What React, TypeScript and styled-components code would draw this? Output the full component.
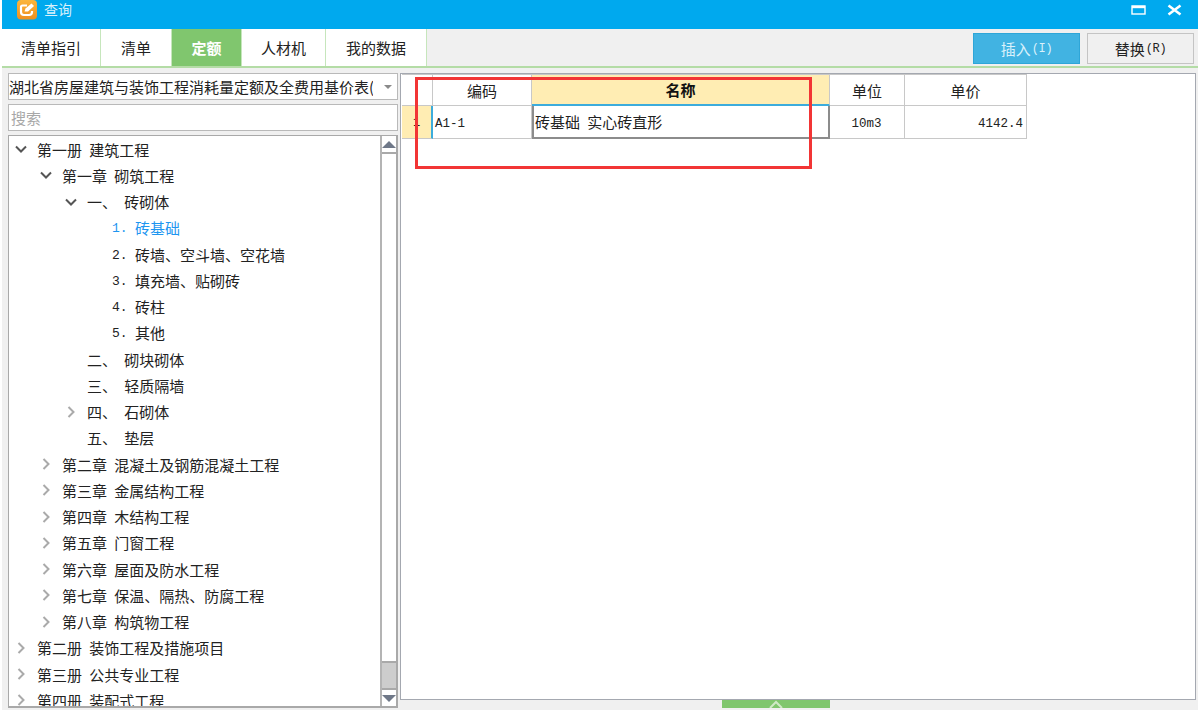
import React from "react";
import styled, { createGlobalStyle } from "styled-components";

const GlobalStyle = createGlobalStyle`
  html, body { margin: 0; padding: 0; height: 100%; background: #fff; overflow: hidden; }
  body { font-family: "Noto Sans CJK SC", "Liberation Sans", sans-serif; font-size: 15px; color: #222; }
`;

const Window = styled.div`
  margin-left: 2px;
  width: 1196px;
  height: 710px;
  display: flex;
  flex-direction: column;
  background: #f0f0f0;
`;

const TitleBar = styled.div`
  height: 29px;
  flex: none;
  box-sizing: border-box;
  display: flex;
  align-items: center;
  padding: 0 15px 10px 15px;
  background: #00a9ee;
  color: #d8f1fc;
  font-size: 14px;
`;

const TitleText = styled.span`
  margin: 0 0 2px 7px;
  flex: 1;
`;

const WinButton = styled.svg`
  width: 16px;
  height: 16px;
  margin-left: 20px;
  display: block;
`;

const ToolBar = styled.div`
  height: 37px;
  flex: none;
  display: flex;
  justify-content: space-between;
  border-bottom: 2px solid #b4dca6;
  box-sizing: content-box;
`;

const Tabs = styled.div`
  display: flex;
`;

const Tab = styled.div<{ $width: number; $active?: boolean }>`
  width: ${(p) => p.$width}px;
  display: flex;
  align-items: center;
  justify-content: center;
  box-sizing: border-box;
  border-right: 1px solid #c6e6bc;
  background: ${(p) => (p.$active ? "#80c66e" : "#fff")};
  color: ${(p) => (p.$active ? "#fff" : "#222")};
  font-weight: ${(p) => (p.$active ? 700 : 400)};
  font-size: 15px;
`;

const Actions = styled.div`
  display: flex;
  gap: 7px;
  padding: 4px 4px 2px 0;
`;

const ActionButton = styled.div<{ $primary?: boolean }>`
  width: 107px;
  display: flex;
  align-items: center;
  justify-content: center;
  box-sizing: border-box;
  border: 1px solid ${(p) => (p.$primary ? "#2ea6d8" : "#c4c4c4")};
  background: ${(p) => (p.$primary ? "#41b3e2" : "#f0f0f0")};
  color: ${(p) => (p.$primary ? "#d9f1fb" : "#222")};
  font-size: 15px;
`;

const Hotkey = styled.span`
  font-family: "Liberation Mono", monospace;
  font-size: 12px;
  margin-left: 1px;
  letter-spacing: -0.4px;
`;

const Body = styled.div`
  flex: 1;
  min-height: 0;
  display: flex;
  padding: 5px 2px 2px 6px;
  gap: 2px;
`;

const LeftPane = styled.div`
  width: 390px;
  flex: none;
  display: flex;
  flex-direction: column;
  gap: 4px;
`;

const Field = styled.div`
  height: 27px;
  flex: none;
  box-sizing: border-box;
  display: flex;
  align-items: center;
  padding: 0 2px;
  background: #fff;
  border: 1px solid #b9b9b9;
  white-space: nowrap;
  overflow: hidden;
`;

const ComboText = styled.span`
  flex: 1;
  margin-left: -2px;
  overflow: hidden;
  color: #222;
`;

const ComboArrow = styled.span`
  flex: none;
  width: 0;
  height: 0;
  margin: 1px 3px 0 11px;
  border-left: 4px solid transparent;
  border-right: 4px solid transparent;
  border-top: 4px solid #8a8a8a;
`;

const SearchHint = styled.span`
  color: #a8a8a8;
`;

const TreeBox = styled.div`
  flex: 1;
  min-height: 0;
  display: flex;
  background: #fff;
  border: 1px solid #a9a9a9;
  border-right-width: 2px;
  border-bottom-width: 2px;
  overflow: hidden;
`;

const TreeList = styled.div`
  flex: 1;
  overflow: hidden;
`;

const TreeRow = styled.div<{ $level: number; $selected?: boolean }>`
  height: 26.25px;
  display: flex;
  align-items: center;
  padding-left: ${(p) => 4 + p.$level * 25}px;
  white-space: pre;
  word-spacing: 4px;
  color: ${(p) => (p.$selected ? "#1e96f0" : "#222")};
`;

const Caret = styled.svg`
  width: 16px;
  height: 16px;
  flex: none;
  margin-right: 8px;
  display: block;
`;

const CaretSpace = styled.span`
  width: 24px;
  flex: none;
`;

const ItemNumber = styled.span`
  width: 23px;
  flex: none;
  padding-top: 2px;
  font-family: "Liberation Mono", monospace;
  font-size: 13px;
`;

const ScrollBar = styled.div`
  width: 16px;
  flex: none;
  box-sizing: border-box;
  display: flex;
  flex-direction: column;
  border-left: 2px solid #b4b4b4;
  background: #cdcdcd;
`;

const ScrollButton = styled.div<{ $down?: boolean }>`
  height: 18px;
  flex: none;
  box-sizing: border-box;
  display: flex;
  align-items: center;
  justify-content: center;
  background: #fff;
  ${(p) => (p.$down ? "border-top: 2px solid #a9a9a9;" : "border-bottom: 2px solid #a9a9a9;")}
`;

const ScrollArrow = styled.span<{ $down?: boolean }>`
  width: 0;
  height: 0;
  border-left: 7px solid transparent;
  border-right: 7px solid transparent;
  ${(p) => (p.$down ? "border-top: 7px solid #6f7888;" : "border-bottom: 7px solid #6f7888;")}
`;

const ScrollThumb = styled.div`
  height: 509px;
  flex: none;
  box-sizing: border-box;
  background: #fff;
  border-bottom: 2px solid #a9a9a9;
`;

const ScrollTrack = styled.div`
  flex: 1;
`;

const RightColumn = styled.div`
  flex: 1;
  min-width: 0;
  display: flex;
  flex-direction: column;
`;

const GridPanel = styled.div`
  position: relative;
  height: 627px;
  flex: none;
  box-sizing: border-box;
  padding: 0 0 0 1px;
  background: #fff;
  border: 1px solid #a4a8b0;
`;

const Grid = styled.div`
  display: grid;
  grid-template-columns: 31px 99px 298px 75px 122px;
  grid-template-rows: 32px 33px;
  width: 625px;
`;

const HeadCell = styled.div<{ $selected?: boolean }>`
  display: flex;
  align-items: center;
  justify-content: center;
  box-sizing: border-box;
  border-right: 1px solid #c8c8c8;
  border-bottom: ${(p) => (p.$selected ? "2px solid #3cacdc" : "1px solid #c8c8c8")};
  border-top: 1px solid #c8c8c8;
  background: ${(p) => (p.$selected ? "#ffedb3" : "#fff")};
  font-weight: ${(p) => (p.$selected ? 700 : 400)};
  color: ${(p) => (p.$selected ? "#111" : "#222")};
`;

const RowMark = styled.div`
  display: flex;
  align-items: center;
  justify-content: center;
  box-sizing: border-box;
  padding-top: 2px;
  background: #ffedb3;
  border-right: 2px solid #3cacdc;
  border-bottom: 1px solid #c8c8c8;
  font-family: "Liberation Mono", monospace;
  font-size: 12px;
`;

const Cell = styled.div<{ $align?: string; $mono?: boolean; $active?: boolean }>`
  display: flex;
  align-items: center;
  box-sizing: border-box;
  padding: 0 ${(p) => (p.$active ? 0 : 3)}px 0 ${(p) => (p.$active ? 1 : 2)}px;
  justify-content: ${(p) => p.$align || "flex-start"};
  white-space: pre;
  word-spacing: 4px;
  ${(p) =>
    p.$active
      ? "border: 2px solid #8c8c8c; border-top: 0;"
      : "border-right: 1px solid #c8c8c8; border-bottom: 1px solid #c8c8c8;"}
  ${(p) => p.$mono && 'padding-top: 3px; font-family: "Liberation Mono", monospace; font-size: 12.5px;'}
`;

const RedFrame = styled.div`
  position: absolute;
  left: 14px;
  top: 3px;
  width: 397px;
  height: 92px;
  box-sizing: border-box;
  border: 3px solid #f23535;
  pointer-events: none;
`;

const Handle = styled.div`
  width: 108px;
  height: 8px;
  flex: none;
  margin-left: 322px;
  display: flex;
  justify-content: center;
  background: #80c66e;
`;

const tabs = [
  { label: "清单指引", width: 99 },
  { label: "清单", width: 71 },
  { label: "定额", width: 70, active: true },
  { label: "人材机", width: 84 },
  { label: "我的数据", width: 101 },
];

type Node = {
  level: number;
  text: string;
  caret?: "open" | "closed";
  num?: string;
  selected?: boolean;
};

const nodes: Node[] = [
  { level: 0, text: "第一册 建筑工程", caret: "open" },
  { level: 1, text: "第一章 砌筑工程", caret: "open" },
  { level: 2, text: "一、 砖砌体", caret: "open" },
  { level: 3, num: "1.", text: "砖基础", selected: true },
  { level: 3, num: "2.", text: "砖墙、空斗墙、空花墙" },
  { level: 3, num: "3.", text: "填充墙、贴砌砖" },
  { level: 3, num: "4.", text: "砖柱" },
  { level: 3, num: "5.", text: "其他" },
  { level: 2, text: "二、 砌块砌体" },
  { level: 2, text: "三、 轻质隔墙" },
  { level: 2, text: "四、 石砌体", caret: "closed" },
  { level: 2, text: "五、 垫层" },
  { level: 1, text: "第二章 混凝土及钢筋混凝土工程", caret: "closed" },
  { level: 1, text: "第三章 金属结构工程", caret: "closed" },
  { level: 1, text: "第四章 木结构工程", caret: "closed" },
  { level: 1, text: "第五章 门窗工程", caret: "closed" },
  { level: 1, text: "第六章 屋面及防水工程", caret: "closed" },
  { level: 1, text: "第七章 保温、隔热、防腐工程", caret: "closed" },
  { level: 1, text: "第八章 构筑物工程", caret: "closed" },
  { level: 0, text: "第二册 装饰工程及措施项目", caret: "closed" },
  { level: 0, text: "第三册 公共专业工程", caret: "closed" },
  { level: 0, text: "第四册 装配式工程", caret: "closed" },
];

const TreeCaret = ({ open }: { open: boolean }) => (
  <Caret viewBox="0 0 16 16" fill="none" strokeWidth="2" stroke={open ? "#555" : "#aaa"}>
    <path d={open ? "M3 5.5l5 5 5-5" : "M5.5 3l5 5-5 5"} />
  </Caret>
);

const Logo = () => (
  <svg width="20" height="20" viewBox="0 0 20 20" style={{ display: "block" }}>
    <defs>
      <linearGradient id="logoFill" x1="0" y1="0" x2="0" y2="1">
        <stop offset="0" stopColor="#fbb63c" />
        <stop offset="1" stopColor="#ef8f1e" />
      </linearGradient>
    </defs>
    <rect x="0" y="0" width="20" height="19.5" rx="4" fill="url(#logoFill)" />
    <path d="M10 5.5H5.5Q4 5.5 4 7v5q0 3 3 3h5q3 0 3-3v-1" fill="none" stroke="#fff" strokeWidth="2.2" />
    <path d="M7.5 11.5l1-3 6-5 2.5 2.5-6 5.5z" fill="#fff" />
  </svg>
);

export default function App() {
  return (
    <>
      <GlobalStyle />
      <Window>
        <TitleBar>
          <Logo />
          <TitleText>查询</TitleText>
          <WinButton viewBox="0 0 16 16" fill="none" stroke="#fff">
            <rect x="1" y="4" width="13" height="8" strokeWidth="1.4" />
            <path d="M1 5h13" strokeWidth="2.4" />
          </WinButton>
          <WinButton viewBox="0 0 16 16" fill="none" stroke="#fff" strokeWidth="2.6">
            <path d="M1.5 3.5l12 9M13.5 3.5l-12 9" />
          </WinButton>
        </TitleBar>
        <ToolBar>
          <Tabs>
            {tabs.map((t) => (
              <Tab key={t.label} $width={t.width} $active={t.active}>
                {t.label}
              </Tab>
            ))}
          </Tabs>
          <Actions>
            <ActionButton $primary>
              插入<Hotkey>(I)</Hotkey>
            </ActionButton>
            <ActionButton>
              替换<Hotkey>(R)</Hotkey>
            </ActionButton>
          </Actions>
        </ToolBar>
        <Body>
          <LeftPane>
            <Field>
              <ComboText>湖北省房屋建筑与装饰工程消耗量定额及全费用基价表(2018)</ComboText>
              <ComboArrow />
            </Field>
            <Field>
              <SearchHint>搜索</SearchHint>
            </Field>
            <TreeBox>
              <TreeList>
                {nodes.map((n) => (
                  <TreeRow key={n.text} $level={n.level} $selected={n.selected}>
                    {n.caret ? <TreeCaret open={n.caret === "open"} /> : <CaretSpace />}
                    {n.num && <ItemNumber>{n.num}</ItemNumber>}
                    {n.text}
                  </TreeRow>
                ))}
              </TreeList>
              <ScrollBar>
                <ScrollButton>
                  <ScrollArrow />
                </ScrollButton>
                <ScrollThumb />
                <ScrollTrack />
                <ScrollButton $down>
                  <ScrollArrow $down />
                </ScrollButton>
              </ScrollBar>
            </TreeBox>
          </LeftPane>
          <RightColumn>
            <GridPanel>
              <Grid>
                <HeadCell />
                <HeadCell>编码</HeadCell>
                <HeadCell $selected>名称</HeadCell>
                <HeadCell>单位</HeadCell>
                <HeadCell>单价</HeadCell>
                <RowMark>1</RowMark>
                <Cell $mono>A1-1</Cell>
                <Cell $active>砖基础 实心砖直形</Cell>
                <Cell $mono $align="center">10m3</Cell>
                <Cell $mono $align="flex-end">4142.4</Cell>
              </Grid>
              <RedFrame />
            </GridPanel>
            <Handle>
              <svg width="16" height="8" viewBox="0 0 16 8" fill="none" stroke="#cfe9c6" strokeWidth="2">
                <path d="M2 8l6-6 6 6" />
              </svg>
            </Handle>
          </RightColumn>
        </Body>
      </Window>
    </>
  );
}
